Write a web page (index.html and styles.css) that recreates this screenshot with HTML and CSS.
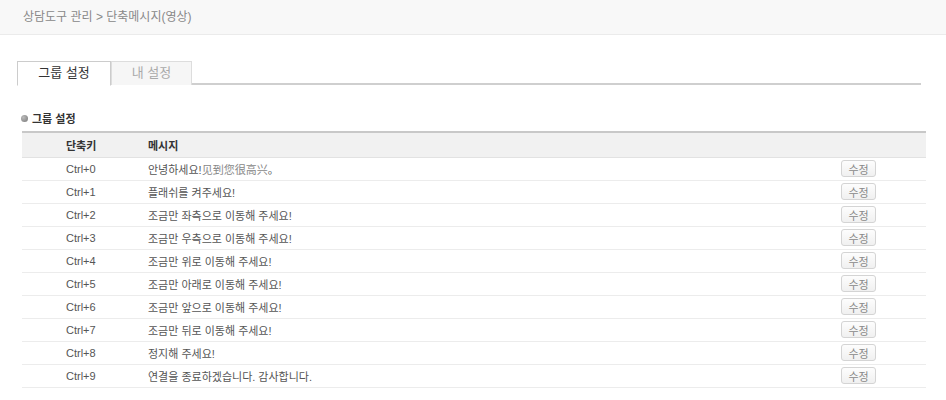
FILE: index.html
```html
<!DOCTYPE html>
<html lang="ko">
<head>
<meta charset="utf-8">
<link rel="stylesheet" href="styles.css">
</head>
<body>
<div class="topbar">상담도구 관리 &gt; 단축메시지(영상)</div>
<div class="content">
  <div class="tabs">
    <div class="tab active">그룹 설정</div>
    <div class="tab">내 설정</div>
  </div>
  <div class="section-title"><span class="dot"></span>그룹 설정</div>
  <table class="grid">
    <thead>
      <tr><th class="c-key">단축키</th><th class="c-msg">메시지</th><th class="c-btn"></th></tr>
    </thead>
    <tbody>
      <tr><td class="c-key">Ctrl+0</td><td class="c-msg">안녕하세요!<span class="zh">见到您很高兴</span>。</td><td class="c-btn"><button class="btn">수정</button></td></tr>
      <tr><td class="c-key">Ctrl+1</td><td class="c-msg">플래쉬를 켜주세요!</td><td class="c-btn"><button class="btn">수정</button></td></tr>
      <tr><td class="c-key">Ctrl+2</td><td class="c-msg">조금만 좌측으로 이동해 주세요!</td><td class="c-btn"><button class="btn">수정</button></td></tr>
      <tr><td class="c-key">Ctrl+3</td><td class="c-msg">조금만 우측으로 이동해 주세요!</td><td class="c-btn"><button class="btn">수정</button></td></tr>
      <tr><td class="c-key">Ctrl+4</td><td class="c-msg">조금만 위로 이동해 주세요!</td><td class="c-btn"><button class="btn">수정</button></td></tr>
      <tr><td class="c-key">Ctrl+5</td><td class="c-msg">조금만 아래로 이동해 주세요!</td><td class="c-btn"><button class="btn">수정</button></td></tr>
      <tr><td class="c-key">Ctrl+6</td><td class="c-msg">조금만 앞으로 이동해 주세요!</td><td class="c-btn"><button class="btn">수정</button></td></tr>
      <tr><td class="c-key">Ctrl+7</td><td class="c-msg">조금만 뒤로 이동해 주세요!</td><td class="c-btn"><button class="btn">수정</button></td></tr>
      <tr><td class="c-key">Ctrl+8</td><td class="c-msg">정지해 주세요!</td><td class="c-btn"><button class="btn">수정</button></td></tr>
      <tr><td class="c-key">Ctrl+9</td><td class="c-msg">연결을 종료하겠습니다. 감사합니다.</td><td class="c-btn"><button class="btn">수정</button></td></tr>
    </tbody>
  </table>
</div>
</body>
</html>
```
FILE: styles.css
```css
* { box-sizing: border-box; }
body {
  margin: 0;
  background: #fff;
  font-family: "Liberation Sans", "Noto Sans CJK KR", sans-serif;
  color: #555;
}
.topbar {
  height: 35px;
  background: #f8f8f8;
  border-bottom: 1px solid #ebebeb;
  padding-left: 23px;
  font-size: 12px;
  line-height: 34px;
  color: #888;
}
.content {
  padding: 26px 20px 0 17px;
}
.tabs {
  display: flex;
  border-bottom: 2px solid #cfcfcf;
  margin-right: 5px;
  height: 24px;
}
.tab {
  width: 81px;
  height: 24px;
  border: 1px solid #ddd;
  border-bottom: none;
  background: #f6f6f6;
  color: #aaa;
  font-size: 13px;
  line-height: 21px;
  text-align: center;
}
.tab.active {
  width: 94px;
  height: 25px;
  background: #fff;
  color: #333;
  border-color: #ccc;
  border-bottom: 1px solid #fff;
  margin-bottom: -2px;
}
.section-title {
  margin: 25px 0 0 4px;
  display: flex;
  align-items: center;
  font-size: 11px;
  font-weight: bold;
  color: #333;
  height: 16px;
}
.dot {
  width: 7px;
  height: 7px;
  border-radius: 50%;
  background: radial-gradient(circle at 35% 35%, #bbb, #777);
  margin-right: 4px;
}
.grid {
  margin: 5px 0 0 5px;
  width: 904px;
  border-collapse: collapse;
  font-size: 11px;
}
.grid th {
  background: #f1f1f1;
  border-top: 2px solid #c8c8c8;
  border-bottom: 1px solid #e2e2e2;
  height: 25px;
  font-weight: bold;
  color: #333;
  text-align: left;
  padding: 0;
}
.grid td {
  height: 23px;
  border-bottom: 1px solid #ececec;
  padding: 0;
  color: #555;
}
.c-key { width: 126px; text-align: left; padding-left: 44px !important; }
.c-msg { padding-left: 0; }
.c-btn { width: 140px; }
.zh { color: #888; }
.btn {
  display: block;
  width: 35px;
  height: 17px;
  margin-left: 55px;
  padding: 0;
  border: 1px solid #d4d4d4;
  border-radius: 3px;
  background: linear-gradient(#fdfdfd, #f0f0f0);
  font-family: "Noto Sans CJK KR", sans-serif;
  font-size: 11px;
  line-height: 14px;
  color: #888;
}
```
